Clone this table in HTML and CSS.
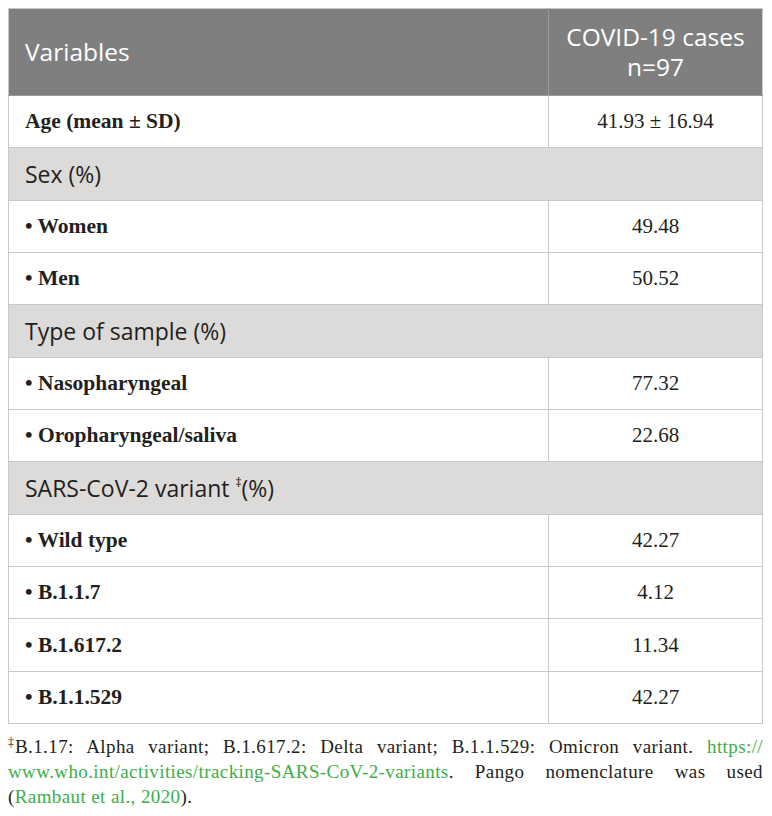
FILE: index.html
```html
<!DOCTYPE html>
<html lang="en">
<head>
<meta charset="utf-8">
<title>COVID-19 cases table</title>
<link rel="stylesheet" href="styles.css">
</head>
<body>
<table class="data">
  <thead>
    <tr class="head">
      <th class="c1">Variables</th>
      <th class="c2">COVID-19 cases<br>n=97</th>
    </tr>
  </thead>
  <tbody>
    <tr class="row"><td class="lab">Age (mean ± SD)</td><td class="val">41.93 ± 16.94</td></tr>
    <tr class="sub"><td colspan="2">Sex (%)</td></tr>
    <tr class="row"><td class="lab">• Women</td><td class="val">49.48</td></tr>
    <tr class="row"><td class="lab">• Men</td><td class="val">50.52</td></tr>
    <tr class="sub"><td colspan="2">Type of sample (%)</td></tr>
    <tr class="row"><td class="lab">• Nasopharyngeal</td><td class="val">77.32</td></tr>
    <tr class="row"><td class="lab">• Oropharyngeal/saliva</td><td class="val">22.68</td></tr>
    <tr class="sub"><td colspan="2">SARS-CoV-2 variant <sup class="dag">‡</sup>(%)</td></tr>
    <tr class="row"><td class="lab">• Wild type</td><td class="val">42.27</td></tr>
    <tr class="row"><td class="lab">• B.1.1.7</td><td class="val">4.12</td></tr>
    <tr class="row"><td class="lab">• B.1.617.2</td><td class="val">11.34</td></tr>
    <tr class="row"><td class="lab">• B.1.1.529</td><td class="val">42.27</td></tr>
  </tbody>
</table>
<p class="note"><span class="fdag">‡</span>B.1.17: Alpha variant; B.1.617.2: Delta variant; B.1.1.529: Omicron variant. <a class="lnk" href="#">https://<wbr>www.who.int/activities/tracking-SARS-CoV-2-variants</a>. Pango nomenclature was used <span class="nw">(<a class="lnk" href="#">Rambaut et al., 2020</a>).</span></p>
</body>
</html>
```

FILE: styles.css
```css
html, body {
  margin: 0;
  padding: 0;
  background: #ffffff;
}
body {
  padding: 8px 9px 0 8px;
}
.data {
  width: 755px;
  border-collapse: collapse;
  table-layout: fixed;
}
.data td, .data th {
  border: 1px solid #c9c9c9;
  padding: 0 16px;
}
.head th {
  background: #7f7f7f;
  color: #ffffff;
  font-family: "Open Sans", sans-serif;
  font-weight: 400;
  font-size: 24.5px;
  line-height: 30px;
  height: 86px;
  border-color: #9a9a9a;
  border-top-color: #c9c9c9;
}
.head .c1 {
  text-align: left;
  width: 507px;
  border-left-color: #c9c9c9;
}
.head .c2 {
  text-align: center;
  border-right-color: #c9c9c9;
  padding: 0 8px;
}
.row td {
  height: 51.35px;
  font-family: "Liberation Serif", serif;
  font-size: 21px;
  color: #231f20;
}
.row .lab {
  font-weight: 700;
  font-size: 21.5px;
  text-align: left;
}
.row .val {
  text-align: center;
}
.sub td {
  height: 51.35px;
  background: #dcdbd9;
  font-family: "Open Sans", sans-serif;
  font-size: 23px;
  color: #231f20;
}
.dag {
  font-size: 12px;
  vertical-align: 10px;
  line-height: 0;
}
.note {
  margin: 10px 0 0 0;
  font-family: "Liberation Serif", serif;
  font-size: 19px;
  line-height: 25px;
  letter-spacing: 0.4px;
  color: #231f20;
  text-align: justify;
  width: 755px;
}
.fdag {
  display: inline-block;
  font-size: 12px;
  line-height: 12px;
  vertical-align: 7px;
  width: 7px;
  letter-spacing: 0;
}
.nw {
  white-space: nowrap;
}
.lnk {
  color: #3cae48;
  text-decoration: none;
}
```
